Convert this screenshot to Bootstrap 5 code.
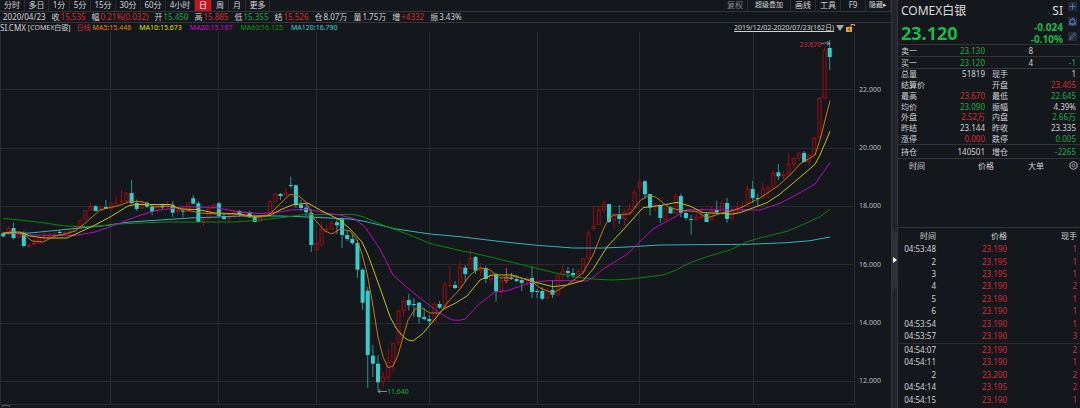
<!DOCTYPE html>
<html lang="zh-CN">
<head>
<meta charset="utf-8">
<meta name="viewport" content="width=device-width, initial-scale=1">
<title>COMEX白银 日线</title>
<link href="https://cdn.jsdelivr.net/npm/bootstrap@5.3.0/dist/css/bootstrap.min.css" rel="stylesheet">
<style>
:root{--bg:#14171c;--line:#33343a;--txt:#d2d3d5;--up:#d92a35;--down:#1aac49}
body{background:var(--bg);color:var(--txt);font-family:"Noto Sans","Noto Sans CJK SC",sans-serif;font-size:8px;line-height:10px}
.up{color:var(--up)}.down{color:var(--down)}
.toolbar{height:12px;border-bottom:1px solid var(--line)}
.toolbar button{background:none;border:0;border-right:1px solid #292b31;color:var(--txt);padding:0 0 2px;line-height:9px;height:11px;white-space:nowrap;font-size:8px}
.toolbar button.on{background:#c4151c;color:#fff}
.toolbar .tight{font-size:7px}
.b16{width:17px}.b21{width:21px}.b24{width:24px}.b25{width:25px}.b29{width:29px}.b43{width:43px}
.quote{height:11px;border-bottom:1px solid var(--line);padding-left:3px;gap:6px;white-space:nowrap}
.quote b{font-weight:400;margin-left:1px}
.legend-row{height:9px;font-size:7px;line-height:10px;white-space:nowrap;gap:2px}
.legend-row .sym{font-size:8px}
.legend-row a{color:var(--txt);text-decoration:underline}
.ma5{color:#e58a0e}.ma10{color:#e2e200}.ma20{color:#d800d8}.ma60{color:#0c9c0c}.ma120{color:#3bd3d7}
.plot svg{position:absolute;inset:0;width:100%;height:100%}
.note{position:absolute;font-size:7px;line-height:8px}
.note svg{position:static;width:9px;height:6px}
.axis{width:36px;font-size:7px;line-height:10px;padding:53px 0 19px 4px;color:#bcbec1}
.foot{height:3px}
.foot i{display:block;width:8px;height:2px;margin-left:2px;border:1px solid #55565b;border-bottom:0}
.splitter{width:7px;background:#25242b;border:solid #34343b;border-width:0 1px}
.splitter button{height:60px;width:5px;border:0;padding:0;background:#302f37}
.side{width:182px}
.side table{width:100%;table-layout:fixed;border-collapse:collapse}
.side td,.side th{padding:0;font-weight:400;white-space:nowrap;line-height:8px;vertical-align:middle}
.head{height:44px;padding:1px 3px 0 3px}
.head h1{font-size:12px;line-height:20px;margin:0;font-weight:400;color:#dcdcdd}
.head .last{font-size:18px;line-height:24px;font-weight:700;color:#1cb84a}
.head .chg{font-size:10px;line-height:12px;font-weight:700;color:#1cb84a}
.head .chg span{display:block}
.head .tools{width:9px;gap:6px;padding-top:1px;margin-left:5px}
.tools button{display:block;width:9px;height:9px;padding:0;border:0;background:#272a34}
.tools svg,.gear svg{display:block}
.book{height:24px;border-top:1px solid var(--line)}
.book tr+tr td{border-top:1px solid var(--line)}
.stats{height:76px;border-top:1px solid var(--line)}
.hold{height:14px;border-top:1px solid var(--line)}
.big{height:70px;border-top:1px solid var(--line);border-bottom:1px solid var(--line);padding:2px 2px 0 11px}
.big span{width:16px;margin-right:25px}
.big span:nth-child(1){margin-right:auto}
.big span:nth-child(2){margin-right:34px}
.big .gear{border:0;padding:0;background:none;width:9px;height:9px}
.ticks{height:178px}
.ticks thead tr{height:15px}
.ticks .cut td{border-top:1px solid #2b2d33}
</style>
</head>
<body>
<div class="d-flex min-vh-100">
  <main class="flex-grow-1 d-flex flex-column overflow-hidden">
    <nav class="toolbar d-flex">
      <button class="b25">分时</button><button class="b24">多日</button><button class="b21">1分</button><button class="b21">5分</button><button class="b25">15分</button><button class="b25">30分</button><button class="b25">60分</button><button class="b29">4小时</button><button class="b16 on">日</button><button class="b16">周</button><button class="b16">月</button><button class="b24">更多</button>
      <button class="b25 ms-auto" style="color:#85878b">复权</button><button class="b43 tight">超级叠加</button><button class="b25">画线</button><button class="b25">工具</button><button class="b25">F9</button><button class="b25 tight">隐藏▸</button>
    </nav>
    <div class="quote d-flex">
      <span>2020/04/23</span><span>收<b class="up">15.535</b></span><span>幅<b class="up">0.21%(0.032)</b></span><span>开<b class="down">15.450</b></span><span>高<b class="up">15.885</b></span><span>低<b class="down">15.355</b></span><span>结<b class="up">15.526</b></span><span>仓<b>8.07万</b></span><span>量<b>1.75万</b></span><span>增<b class="up">+4332</b></span><span>振<b>3.43%</b></span>
    </div>
    <div class="legend-row d-flex">
      <span class="sym">SI.CMX</span><span class="me-1">[COMEX白银]</span><span class="up">日线</span>
      <div class="d-flex gap-2"><span class="ma5">MA5:15.446</span><span class="ma10">MA10:15.673</span><span class="ma20">MA20:15.167</span><span class="ma60">MA60:16.125</span><span class="ma120">MA120:16.790</span></div>
      <a href="#" class="ms-auto">2019/12/02-2020/07/23(162日)</a>
      <svg width="20" height="9" viewBox="0 0 20 9" style="margin-right:35px"><path d="M0 2h8l-4 6z" fill="#a5a6a8"/><path d="M10 4h6v5h-6z" fill="#e5a52d"/><path d="M15 4V1.500h3.500V3" fill="none" stroke="#e5a52d"/><path d="M12.500 5.500h1.500v2h-1.500z" fill="#5b3b06"/></svg>
    </div>
    <div class="d-flex flex-grow-1">
      <div class="plot flex-grow-1 position-relative">
        <svg id="chart" viewBox="0 32 855 373" preserveAspectRatio="none">
          <path id="grid" fill="none" stroke="#2a2c31" d="M0 89.500H858M0 148.500H858M0 206.500H858M0 264.500H858M0 323.500H858M0 381.500H858M.5 32V405M110.500 32V405M218.500 32V405M316.500 32V405M429.500 32V405M537.500 32V405M639.500 32V405M753.500 32V405M854.500 32V405M0 404.500H855"/>
          <g id="candles"></g>
          <g fill="none" stroke-linejoin="round" stroke-width="1">
            <polyline stroke="#32b4b9" points="3,233.500 30,233 60,230 80,228 105,225.500 130,222 160,220 190,218 218,217 240,216 280,216 300,216.700 330,218 350,219 363,221 380,225 396,229 430,234 460,236.700 500,241.500 537,245.300 573,248 603,248 627,247 660,245 747,244.300 787,242.700 810,240.700 830,237"/>
            <polyline stroke="#0b850f" points="3,218.500 20,220 45,223 65,226 80,226.500 100,226 120,224 140,223 165,222 235,222 260,220 283,217.500 303,214.700 353,214.300 363,216.700 387,226.700 410,235 430,243.500 460,250.500 473,253 500,259.300 523,265 557,273.300 583,278 600,279.500 613,280 630,279 647,277 663,275 675,270.500 690,262.700 707,256.700 730,250 747,241.700 760,238 787,231.300 803,224.500 820,216.700 830,209.300"/>
            <polyline stroke="#b90dbc" points="3,233 10,232 25,235 75,235.500 95,232 115,225 135,217 155,210.700 185,206.700 215,207.500 240,212 260,213.500 275,212.700 290,210 308,209.300 325,213 340,215 355,219 365,227 380,249 393,275 410,290 427,303.300 440,313.300 447,317.500 453,320 459,320.300 465,319 480,303.300 495,292 507,290.700 530,282.700 550,280.500 587,281 593,277.300 603,269 627,254.300 653,229 680,214 687,209.700 760,210 780,203.300 800,192.700 815,184 830,162.700"/>
            <polyline stroke="#c4c015" points="3,233 20,232 30,236 45,238 67,238 80,232 95,225 110,217 128,206 135,204.500 170,204.500 180,209 197,209.500 215,213 235,213.700 255,216.300 270,215.500 280,210 292,205 308,203 320,210 340,220 350,229 362,242 368,255 380,288 390,316.700 396,328 403,336.700 408,340 413,341 423,333.300 443,309.300 455,303.300 467,296 480,280 492,275 512,275 533,281.700 553,286.700 567,285 583,280.700 593,269.300 607,247 623,230 643,207.700 663,205 677,202.300 690,206 703,212.700 720,213.300 730,214.300 740,212.700 767,202.700 780,194 800,177.300 815,164.300 820,155 830,131.300"/>
            <polyline stroke="#c4780d" points="3,233 15,231.500 25,235 32,241 43,242 55,236 65,234 75,231 83,225 100,210 108,208 117,206 130,201.500 142,201.700 155,207 165,206 178,208 190,210.700 200,213 218,214 235,214 250,217 262,217 270,214 282,202 290,194.500 298,195.500 306,202 315,220 325,231 332,234 340,229 350,231 357,240 362,254 367,273 372,300 378,337 383,357 388,367.700 393,366 398,355 408,320 415,309 422,308 430,313 440,313 447,303 460,289 470,275 480,267.700 490,270 500,278 515,276.700 530,280 540,288 553,293 567,285 583,273 593,255 603,230 607,222 613,215 630,214 640,200.700 647,196 655,196.700 670,208 680,210 697,211.700 707,218 723,212.700 733,210.700 743,206.700 760,198 777,186.700 790,175 800,164 815,155 820,140 830,100.700"/>
          </g>
        </svg>
        <span class="note up d-flex" style="left:93.500%;top:2.300%">23.670<svg viewBox="0 0 9 6"><path d="M0 3Q3 1 9 2.500M6 0L9 2.500 6 4" fill="none" stroke="#aaa" stroke-width=".8"/></svg></span>
        <span class="note down d-flex" style="left:44.200%;top:95.500%"><svg viewBox="0 0 9 6"><path d="M9 3.500H0M2.500 1.500L0 3.500 2.500 5.500" fill="none" stroke="#aaa" stroke-width=".8"/></svg>11.640</span>
      </div>
      <div class="axis d-flex flex-column justify-content-between"><span>22.000</span><span>20.000</span><span>18.000</span><span>16.000</span><span>14.000</span><span>12.000</span></div>
    </div>
    <div class="foot"><i></i></div>
  </main>

  <div class="splitter d-flex flex-column justify-content-center" style="padding-top:112px">
    <button aria-label="收起"><svg class="d-block" width="5" height="60" viewBox="0 0 5 60"><path d="M0 0h5v3zM0 60h5v-3z" fill="#25242b"/><path d="M1 27l4 3-4 3z" fill="#fff"/></svg></button>
  </div>

  <aside class="side">
    <div class="head d-flex">
      <div class="flex-grow-1"><h1>COMEX白银</h1><div class="last">23.120</div></div>
      <div class="text-end"><h1>SI</h1><div class="chg"><span>-0.024</span><span>-0.10%</span></div></div>
      <div class="tools d-flex flex-column">
        <button aria-label="添加"><svg viewBox="0 0 9 9"><path d="M4.500 1.500v6M1.500 4.500h6" stroke="#3f7fcb"/></svg></button>
        <button aria-label="提醒"><svg viewBox="0 0 9 9"><path d="M1 7h7M2 7V4.500a2.500 2.500 0 0 1 5 0V7M4.500 1v1M3.500 8h2" fill="none" stroke="#4a8fe0"/></svg></button>
        <button aria-label="编辑"><svg viewBox="0 0 9 9"><path d="M1.500 7.500l.6-2L6.500 1.200l1.300 1.300-4.300 4.400z" fill="none" stroke="#3f76be"/></svg></button>
      </div>
    </div>
    <table class="book"><colgroup><col style="width:3px"><col style="width:30px"><col><col style="width:48px"><col style="width:43px"><col style="width:4px"></colgroup>
      <tr><td></td><td>卖一</td><td class="text-end down">23.130</td><td class="text-end">8</td><td></td><td></td></tr>
      <tr><td></td><td>买一</td><td class="text-end down">23.120</td><td class="text-end">4</td><td class="text-end down">-1</td><td></td></tr>
    </table>
    <table class="stats"><colgroup><col style="width:3px"><col style="width:30px"><col><col style="width:7px"><col style="width:30px"><col style="width:54px"><col style="width:4px"></colgroup>
      <tr><td></td><td>总量</td><td class="text-end">51819</td><td></td><td>现手</td><td class="text-end">1</td><td></td></tr>
      <tr><td></td><td>结算价</td><td></td><td></td><td>开盘</td><td class="text-end up">23.405</td><td></td></tr>
      <tr><td></td><td>最高</td><td class="text-end up">23.670</td><td></td><td>最低</td><td class="text-end down">22.645</td><td></td></tr>
      <tr><td></td><td>均价</td><td class="text-end down">23.090</td><td></td><td>振幅</td><td class="text-end">4.39%</td><td></td></tr>
      <tr><td></td><td>外盘</td><td class="text-end up">2.52万</td><td></td><td>内盘</td><td class="text-end down">2.66万</td><td></td></tr>
      <tr><td></td><td>昨结</td><td class="text-end">23.144</td><td></td><td>昨收</td><td class="text-end">23.335</td><td></td></tr>
      <tr><td></td><td>涨停</td><td class="text-end up">0.000</td><td></td><td>跌停</td><td class="text-end down">0.005</td><td></td></tr>
    </table>
    <table class="hold"><colgroup><col style="width:3px"><col style="width:30px"><col><col style="width:7px"><col style="width:30px"><col style="width:54px"><col style="width:4px"></colgroup>
      <tr><td></td><td>持仓</td><td class="text-end">140501</td><td></td><td>增仓</td><td class="text-end down">-2265</td><td></td></tr>
    </table>
    <div class="big d-flex align-items-start">
      <span>时间</span><span>价格</span><span>大单</span>
      <button class="gear" aria-label="设置"><svg viewBox="0 0 9 9"><path d="M4.500.5L8 2.500v4L4.500 8.500 1 6.500v-4z" fill="none" stroke="#b5b6b8" stroke-linejoin="round"/><circle cx="4.500" cy="4.500" r="1.400" fill="none" stroke="#b5b6b8" stroke-width=".8"/></svg></button>
    </div>
    <table class="ticks"><colgroup><col style="width:38px"><col><col style="width:70px"><col style="width:3px"></colgroup>
      <thead><tr class="text-end"><th>时间</th><th>价格</th><th>现手</th><th></th></tr></thead>
      <tbody id="ticks" class="text-end"></tbody>
    </table>
  </aside>
</div>
<script>
// one entry per trading day: direction, high, body top, body bottom, low (plot units)
const days = `d231.7 233.3 236.3 237.3|u226 228 233.3 236.7|d222.7 228 238 239.3|u232 234 237.3 238|d231 233 246 247|u244 245 246.5 248|u238.7 243 244.5 245.3|u236 237.5 243.3 244|u230 235 237 240|u233 236 237 239|u231 234 236 238|d230 232 233 235|u231 232.5 234 236|u230 231 233 235|u226 226 231 232|u220 220.3 228.3 229|u210 210.3 220 220|u202 206.3 210.3 210.3|d205 206.3 211 211|u206.5 207.7 210.7 210.7|d200 207 209 209|u202 203.7 208.7 210|u196.7 203 204 204|u190 201 202 203|u192 193 201 203|d180 193 203.3 204|d199.5 203 209 210.7|u200 202.7 208.3 209|d201.5 202.7 206.7 208|d206 206.7 212 215|u204 206 210.7 213|d203.5 205.5 207.5 209|u201 204 206 208|d201 204.7 212.7 216.7|u208 210 211.5 215|d209.5 210.7 211.7 217|u202 202.7 212 212|d195 198.3 203.7 204|d201 203.3 222 222|u218 219.3 222.7 226|u205 208.3 219.3 219.3|u203 205 208 209|d202 203.3 216 217.5|d214 216 219 220|u214 217.3 219.3 221|u210 211.7 215 218|d210 211 215 217|u211 211.7 215 215|d211 212.7 217.3 218|d215 216.7 222 222|u217 217.3 221.5 222|u212 215 217 218|u200 201.3 214 214|u193 194 201.7 202|d193 194 196 200|u188 193 195.7 196|d176.7 185 186 188|d184.5 185.3 205 208|d200 204.7 208 211|d203 207.7 212.3 216|d209 212.7 245 252|u233 243 250 250.5|u222 229 245 246|u225 228.5 229.5 232|u221 223.3 229 230|d219 222.3 225.3 234|d217 219.3 235 248|d230.5 235 239 241|d234 239 243 245|d240 243 269.7 278|d268 269.7 302.7 310|d287 290.7 355 387.7|d345 355.7 363.7 377|d355 363.7 382.3 391|u372 377.3 382 387.5|u349.3 362.3 377.7 380|u343 343.3 362.7 372|u309 311 342.7 345|u296 301.3 310.7 316.7|d294 300 305.3 310.5|d298 304 305 317|d302 302.7 317 323.5|d308 317 319 320.7|d315 319 321.3 326|u302 304 321.7 322|d301 304 307.7 309|u282 284.3 307.3 310|u266 285 286 287|d281 285 288 289|u262 267.3 287.7 288|d265 267.7 274 282|u250 258.3 268.7 269|d256 257 270.7 274|u263 268.7 271 276|d266 268 279 283|u272 275 280 284|d273 274.3 291.3 301.7|u278 280.7 291.3 297|h268 278 281 283.3|d273 278 279 280|d275 279 281 282|d279 280 283 291|u276 278.5 281 286|d266 278 292 298|d289 291 292 298|d287 291 298.7 300|u288 290.3 298 299.5|d281 290 294.7 298|u273 275.3 295.3 295.3|u265 270.7 275 279|d267 271 273 278|d268 273 275.3 278|u269 271.3 274.7 275|u258 258.3 272 274|u231 233 258.7 259|u206.7 226 228.7 230.5|u206 210 224.7 225|u201 204.3 210 213|d204 204 222 223|u213 215.3 220 229.3|d205 214.7 219 224|u209 212.3 218.7 225|u203 208.7 212.7 213|u190 192 208.3 208.3|u178.3 182.3 188 192|d180 181.3 194.3 199|d194 194 207.7 215.3|u203 206 207 211|d205 205.3 218 223|u208 208.7 220 220|d206 207.3 213.3 214|u193.5 196 213.3 214|d193.5 196 212.7 217|d211 213 218 220|d215 219 220 234.7|u211 217.3 220 221|u208 216 217.7 220|d212 214 222 222|u206 211 220 220|d200.7 210 212.3 214|u201 203 213.3 213.3|d198 203 219 222.7|u206 210 218.3 220|u202 208 210 213|u202 206 207 211|u186 189 203.3 204|d181 189 198 203|d194 198 199 206|u183 189 197 199|u185 188 189 198|u170 173 187.7 188|d164 172.3 176.3 180|u171 174.5 176 179|u153.3 164 175 175|u157 158.3 164 168|u152 153.3 158.3 161|d151 153 162 162|u154 155.3 162 166|u137 138 154.7 155|u97 98.3 137.3 138|u48 50.3 98.3 99|d40 48 57 70`;
const step = 826.4 / 161;
document.getElementById('candles').innerHTML = days.split('|').map((s, i) => {
  const [hi, top, bot, lo] = s.slice(1).split(' ').map(Number);
  const x = 3.3 + i * step, h = Math.max(bot - top, 1);
  if (s[0] === 'd')
    return `<path d="M${x} ${hi}V${lo}" stroke="#2a9497"/><rect x="${x - 2}" y="${top}" width="4" height="${h}" fill="#35cccc"/>`;
  const c = s[0] === 'h' ? '#e04040' : '#9c0d12';
  return `<path d="M${x} ${hi}V${top}M${x} ${bot}V${lo}" stroke="${c}"/><rect x="${x - 1.5}" y="${top + .3}" width="3" height="${Math.max(h - .6, .5)}" fill="none" stroke="${c}"/>`;
}).join('');

const trades = [['04:53:48','23.190',1],['2','23.195',1],['3','23.195',1],['4','23.190',2],['5','23.190',1],['6','23.190',1],['04:53:54','23.190',1],['04:53:57','23.190',3],['04:54:07','23.190',2],['04:54:11','23.190',1],['2','23.200',2],['04:54:14','23.195',2],['04:54:15','23.190',1]];
document.getElementById('ticks').innerHTML = trades.map((t, i) =>
  `<tr${i === 8 ? ' class="cut"' : ''}><td>${t[0]}</td><td class="up">${t[1]}</td><td class="up">${t[2]}</td><td></td></tr>`).join('');
</script>
<script src="https://cdn.jsdelivr.net/npm/bootstrap@5.3.0/dist/js/bootstrap.bundle.min.js"></script>
</body>
</html>
